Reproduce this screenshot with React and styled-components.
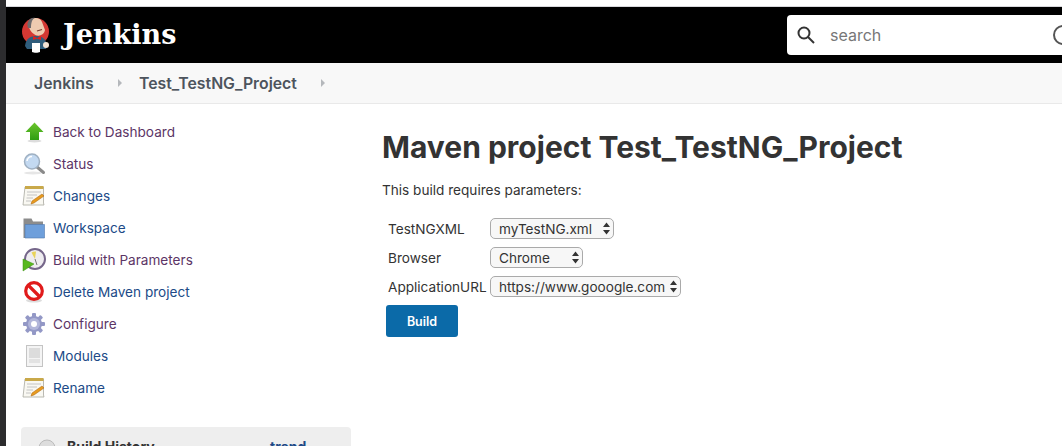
import { Fragment } from "react";
import styled, { createGlobalStyle } from "styled-components";

const GlobalStyle = createGlobalStyle`
  html, body {
    margin: 0;
    padding: 0;
    height: 446px;
    overflow: hidden;
    background: #fff;
    font-family: Inter, "Liberation Sans", sans-serif;
    font-size: 13.6px;
    color: #333;
  }
`;

const Page = styled.div`
  display: flex;
  width: 1062px;
  height: 446px;
  overflow: hidden;
`;

const Strip = styled.div`
  flex: none;
  width: 6px;
  background: #2c2c2e;
`;

const Window = styled.div`
  flex: 1;
  min-width: 0;
  display: flex;
  flex-direction: column;
  padding-top: 6px;
`;

const Header = styled.header`
  flex: none;
  height: 57px;
  box-sizing: border-box;
  display: flex;
  align-items: center;
  justify-content: space-between;
  background: #000;
  border-top: 1px solid #d8d8dc;
  padding-left: 16px;
`;

const Brand = styled.div`
  display: flex;
  align-items: center;
  gap: 12px;
`;

const Wordmark = styled.span`
  font-family: "DejaVu Serif", "Liberation Serif", serif;
  font-weight: 700;
  font-size: 27px;
  line-height: 30px;
  color: #fff;
`;

const SearchBox = styled.div`
  flex: none;
  width: 275px;
  height: 40px;
  display: flex;
  align-items: center;
  gap: 15px;
  padding-left: 10px;
  box-sizing: border-box;
  background: #fff;
  border-radius: 4px 0 0 4px;
`;

const SearchInput = styled.input`
  flex: 1;
  min-width: 0;
  border: 0;
  outline: 0;
  padding: 0;
  font: 16px Inter, "Liberation Sans", sans-serif;
  color: #333;
  &::placeholder {
    color: #777;
    opacity: 1;
  }
`;

const HelpRing = styled.span`
  flex: none;
  width: 16px;
  height: 16px;
  margin-right: -11px;
  border: 2px solid #555;
  border-radius: 50%;
`;

const Breadcrumbs = styled.nav`
  flex: none;
  height: 41px;
  display: flex;
  align-items: center;
  padding-left: 28px;
  background: #f8f8f8;
  border-bottom: 1px solid #e9e9e9;
  box-sizing: border-box;
  font-size: 15.8px;
  font-weight: 600;
  color: #4d545d;
`;

const Crumb = styled.span`
  width: ${(p) => p.$width}px;
`;

const Caret = styled.span`
  width: 0;
  height: 0;
  margin-right: ${(p) => p.$after}px;
  border-left: 4px solid #b5b8bc;
  border-top: 4px solid transparent;
  border-bottom: 4px solid transparent;
`;

const Body = styled.div`
  flex: 1;
  min-height: 0;
  display: flex;
`;

const Side = styled.aside`
  flex: none;
  width: 345px;
  padding: 12px 0 0 15px;
  box-sizing: border-box;
`;

const Tasks = styled.ul`
  list-style: none;
  margin: 0;
  padding: 0;
`;

const Task = styled.li`
  height: 32px;
  display: flex;
  align-items: center;
  gap: 7px;
  padding-left: 1px;
`;

const IconSlot = styled.span`
  flex: none;
  width: 24px;
  height: 24px;
  display: flex;
`;

const TaskLink = styled.a`
  text-decoration: none;
  color: ${(p) => (p.$visited ? "#5c3566" : "#204a87")};
`;

const HistoryBox = styled.div`
  margin-top: 23px;
  height: 60px;
  display: flex;
  padding: 11px 0 0 16px;
  box-sizing: border-box;
  background: #eee;
  border-radius: 4px;
  font-size: 14px;
  font-weight: 700;
`;

const HistoryTitle = styled.span`
  margin-left: 10px;
  width: 203px;
  color: #333;
`;

const TrendLink = styled.span`
  color: #204a87;
`;

const Main = styled.main`
  flex: 1;
  padding: 23px 0 0 31px;
`;

const Title = styled.h1`
  margin: 0;
  font-size: 30px;
  line-height: 40px;
  font-weight: 700;
  color: #333;
`;

const Intro = styled.p`
  margin: 13px 0 0;
  line-height: 20px;
`;

const ParamGrid = styled.div`
  margin: 18px 0 0 6px;
  display: grid;
  grid-template-columns: 102px max-content;
  row-gap: 8px;
  align-items: center;
  justify-items: start;
`;

const SelectWrap = styled.span`
  position: relative;
  display: block;
  width: ${(p) => p.$width}px;
  height: 21px;
`;

const Select = styled.select`
  appearance: none;
  display: block;
  width: 100%;
  height: 100%;
  padding: 0 0 0 8px;
  margin: 0;
  background: #f7f7f7;
  border: 1px solid #aaa;
  border-radius: 5px;
  box-sizing: border-box;
  font: 13.6px Inter, "Liberation Sans", sans-serif;
  color: #333;
`;

const Updown = styled.svg`
  position: absolute;
  right: 4px;
  top: 4px;
  width: 7px;
  height: 13px;
  pointer-events: none;
`;

const BuildButton = styled.button`
  display: block;
  margin: 8px 0 0 4px;
  width: 72px;
  height: 32px;
  border: 0;
  border-radius: 3px;
  background: #0b6aa8;
  color: #fff;
  font: 600 12.5px Inter, "Liberation Sans", sans-serif;
`;

const JenkinsLogo = () => (
  <svg width="29" height="38" viewBox="0 0 29 38">
    <circle cx="13.5" cy="15.5" r="13.5" fill="#d33833" />
    <path d="M3 30 C4 22 9 20 14 20 C19 20 24 22 25 30 L24 33 H5 Z" fill="#2f5d7c" />
    <path d="M7 7 C8 1 18 0 20 6 L23 14 C22 20 15 21 12 18 C9 16 6 12 7 7 Z" fill="#eecbb0" />
    <path d="M6 12 C4 6 8 1 13 2 C10 3 9 7 9 12 Z" fill="#6d6b6d" />
    <path d="M15 15 L20 13.5" stroke="#7a3d30" strokeWidth="1.3" />
    <path d="M11 20 L15 22 L19 20 L19 24 L15 22.5 L11 24 Z" fill="#e0201c" />
    <path d="M10 27 H18 V36 C16 37 12 37 10 36 Z" fill="#fff" />
    <circle cx="24" cy="29" r="3" fill="#f3e3d4" />
  </svg>
);

const ArrowUpIcon = () => (
  <svg viewBox="0 0 24 24" width="24" height="24">
    <defs>
      <linearGradient id="arrowFill" x1="0" y1="0" x2="0" y2="1">
        <stop offset="0" stopColor="#6cc52d" />
        <stop offset="1" stopColor="#2f9e12" />
      </linearGradient>
    </defs>
    <ellipse cx="12.5" cy="21" rx="7" ry="1.5" fill="#ddd" />
    <path d="M12.5 2.5 L21.5 12 H17 V20 H8 V12 H3.5 Z" fill="url(#arrowFill)" />
  </svg>
);

const LensIcon = () => (
  <svg viewBox="0 0 24 24" width="24" height="24">
    <ellipse cx="11" cy="21" rx="9" ry="1.5" fill="#e6e6e6" />
    <path d="M15 15 L21.5 20.5" stroke="#8a8a8a" strokeWidth="3" strokeLinecap="round" />
    <circle cx="10" cy="9.5" r="7.5" fill="#c3d9f1" stroke="#9fb0c2" strokeWidth="1.5" />
    <path d="M5 9 A5 5 0 0 1 10 4.5" stroke="#fff" strokeWidth="1.5" fill="none" />
  </svg>
);

const NotepadIcon = () => (
  <svg viewBox="0 0 24 24" width="24" height="24">
    <path d="M3 3 H21.5 V19 L22 21 H1 Z" fill="#f9f8f2" stroke="#a8a8a0" strokeWidth="0.8" />
    <rect x="3" y="2" width="18.5" height="3" fill="#c9a94a" />
    <path d="M5 8 H19 M5 11 H15 M4.5 14 H11 M4 17 H9" stroke="#c4c4c4" strokeWidth="1" />
    <path d="M10 17 L20 10 L22 12 L12 19 L9 20 Z" fill="#e79b1f" stroke="#a9600f" strokeWidth="0.5" />
  </svg>
);

const FolderIcon = () => (
  <svg viewBox="0 0 24 24" width="24" height="24">
    <path d="M1.5 2.5 H9.5 L11 5.5 H21 V22 H1.5 Z" fill="#8c8c8c" />
    <path d="M3 8.5 H22.5 V22 H3 Z" fill="#6e9fdb" stroke="#5279ac" strokeWidth="0.6" />
  </svg>
);

const ClockIcon = () => (
  <svg viewBox="0 0 24 24" width="24" height="24">
    <circle cx="13" cy="11" r="10" fill="#eeecf0" stroke="#75668a" strokeWidth="2" />
    <path d="M13 11 L9.5 4.5 A7.5 7.5 0 0 1 14 3.5 Z" fill="#e8d35a" />
    <path d="M13 11 L15 17" stroke="#777" strokeWidth="1" />
    <path d="M1 11 L12 16 L1 23 Z" fill="#58b81f" stroke="#3b8f10" strokeWidth="0.5" />
  </svg>
);

const NoEntryIcon = () => (
  <svg viewBox="0 0 24 24" width="24" height="24">
    <ellipse cx="12" cy="20.5" rx="8" ry="2" fill="#ddd" />
    <circle cx="12" cy="11" r="8.3" fill="#fff" stroke="#e01b1b" strokeWidth="3.2" />
    <path d="M6 5 L18 17" stroke="#e01b1b" strokeWidth="3.2" />
  </svg>
);

const GearIcon = () => (
  <svg viewBox="0 0 24 24" width="24" height="24">
    <g fill="#9398c6">
      <circle cx="12" cy="12" r="8" />
      {[0, 45, 90, 135, 180, 225, 270, 315].map((a) => (
        <rect key={a} x="10" y="1" width="4" height="5" rx="1" transform={`rotate(${a} 12 12)`} />
      ))}
    </g>
    <circle cx="12" cy="12" r="6" fill="#b2b6da" />
    <circle cx="12" cy="12" r="3" fill="#fff" />
  </svg>
);

const ModuleIcon = () => (
  <svg viewBox="0 0 24 24" width="24" height="24">
    <rect x="4.5" y="1.5" width="16" height="21" fill="#f4f4f4" stroke="#c4c4c4" />
    <rect x="7" y="4" width="11" height="10" fill="#dcdcdc" />
    <rect x="7" y="15" width="11" height="4" fill="#e2e2e2" />
  </svg>
);

const SearchIcon = () => (
  <svg width="18" height="18" viewBox="0 0 18 18" fill="none" stroke="#333" strokeWidth="2">
    <circle cx="7" cy="7" r="5.5" />
    <path d="M11 11 L17 17" />
  </svg>
);

const tasks = [
  { label: "Back to Dashboard", Icon: ArrowUpIcon, visited: true },
  { label: "Status", Icon: LensIcon, visited: true },
  { label: "Changes", Icon: NotepadIcon },
  { label: "Workspace", Icon: FolderIcon },
  { label: "Build with Parameters", Icon: ClockIcon, visited: true },
  { label: "Delete Maven project", Icon: NoEntryIcon },
  { label: "Configure", Icon: GearIcon, visited: true },
  { label: "Modules", Icon: ModuleIcon },
  { label: "Rename", Icon: NotepadIcon },
];

const params = [
  { name: "TestNGXML", value: "myTestNG.xml", width: 124 },
  { name: "Browser", value: "Chrome", width: 93 },
  { name: "ApplicationURL", value: "https://www.gooogle.com", width: 191 },
];

export default function App() {
  return (
    <Page>
      <GlobalStyle />
      <Strip />
      <Window>
        <Header>
          <Brand>
            <JenkinsLogo />
            <Wordmark>Jenkins</Wordmark>
          </Brand>
          <SearchBox>
            <SearchIcon />
            <SearchInput placeholder="search" />
            <HelpRing />
          </SearchBox>
        </Header>
        <Breadcrumbs>
          <Crumb $width={84}>Jenkins</Crumb>
          <Caret $after={17} />
          <Crumb $width={182}>Test_TestNG_Project</Crumb>
          <Caret $after={0} />
        </Breadcrumbs>
        <Body>
          <Side>
            <Tasks>
              {tasks.map(({ label, Icon, visited }) => (
                <Task key={label}>
                  <IconSlot>
                    <Icon />
                  </IconSlot>
                  <TaskLink href="#" $visited={visited}>
                    {label}
                  </TaskLink>
                </Task>
              ))}
            </Tasks>
            <HistoryBox>
              <svg width="20" height="20" viewBox="0 0 20 20">
                <circle cx="10" cy="10" r="8" fill="#ddd" stroke="#bbb" />
              </svg>
              <HistoryTitle>Build History</HistoryTitle>
              <TrendLink>trend</TrendLink>
            </HistoryBox>
          </Side>
          <Main>
            <Title>Maven project Test_TestNG_Project</Title>
            <Intro>This build requires parameters:</Intro>
            <ParamGrid>
              {params.map((p) => (
                <Fragment key={p.name}>
                  <span>{p.name}</span>
                  <SelectWrap $width={p.width}>
                    <Select defaultValue={p.value}>
                      <option>{p.value}</option>
                    </Select>
                    <Updown viewBox="0 0 7 13">
                      <path d="M3.5 0.5 L7 5 H0 Z M3.5 12.5 L7 8 H0 Z" fill="#333" />
                    </Updown>
                  </SelectWrap>
                </Fragment>
              ))}
            </ParamGrid>
            <BuildButton>Build</BuildButton>
          </Main>
        </Body>
      </Window>
    </Page>
  );
}
